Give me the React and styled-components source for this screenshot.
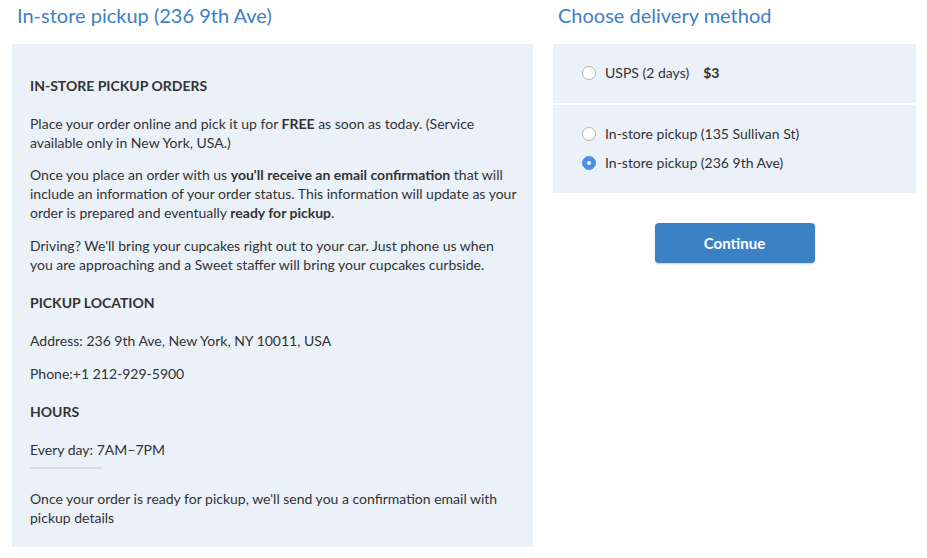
import React from "react";
import styled, { createGlobalStyle } from "styled-components";

const Global = createGlobalStyle`
    body {
        margin: 0;
        background: #ffffff;
        font-family: "Lato", "Open Sans", sans-serif;
        color: #333333;
    }
`;

const Page = styled.div`
    display: grid;
    grid-template-columns: 521px 363px;
    column-gap: 20px;
    padding: 3px 11px 12px 12px;
`;

const Column = styled.div`
    display: flex;
    flex-direction: column;
`;

const Title = styled.h2`
    margin: 0 0 17px 5px;
    font-size: 20px;
    line-height: 24px;
    font-weight: 400;
    color: #3d7fc4;
`;

const InfoPanel = styled.div`
    background: #eaf1f9;
    padding: 32px 14px 20px 18px;
    font-size: 14px;
    line-height: 19px;
`;

const Heading = styled.h4`
    margin: 19px 0;
    font-size: 14px;
    line-height: 19px;
    font-weight: 700;
    text-transform: uppercase;
    &:first-child {
        margin-top: 0;
    }
`;

const Para = styled.p`
    margin: 0 0 ${(p) => p.$gap ?? 14}px;
    b {
        font-weight: 700;
    }
`;

const Rule = styled.div`
    width: 72px;
    height: 2px;
    background: #d8dde5;
    margin-bottom: 20px;
`;

const Options = styled.div`
    display: flex;
    flex-direction: column;
    gap: 2px;
`;

const Group = styled.div`
    background: #eaf1f9;
    padding: 19px 30px 21px;
    display: flex;
    flex-direction: column;
    gap: 10px;
`;

const Option = styled.label`
    display: flex;
    align-items: center;
    gap: 9px;
    font-size: 14px;
    line-height: 19px;
    cursor: pointer;
`;

const Radio = styled.span`
    width: 14px;
    height: 14px;
    margin-left: -1px;
    box-sizing: border-box;
    border-radius: 50%;
    flex-shrink: 0;
    border: 1px solid ${(p) => (p.$checked ? "#4a90e2" : "#b5b5b5")};
    background: ${(p) => (p.$checked ? "#4a90e2" : "#ffffff")};
    display: flex;
    align-items: center;
    justify-content: center;
    &::after {
        content: "";
        width: 4px;
        height: 4px;
        border-radius: 50%;
        background: #ffffff;
        display: ${(p) => (p.$checked ? "block" : "none")};
    }
`;

const Price = styled.span`
    font-weight: 700;
    margin-left: 5px;
`;

const Actions = styled.div`
    display: flex;
    justify-content: center;
    padding-top: 30px;
`;

const Button = styled.button`
    width: 160px;
    height: 40px;
    border: none;
    border-radius: 4px;
    background: #3b82c4;
    color: #ffffff;
    font-family: inherit;
    font-size: 15px;
    font-weight: 700;
    box-shadow: 0 1px 2px rgba(0, 0, 0, 0.2);
    cursor: pointer;
`;

const App = () => (
    <>
        <Global />
        <Page>
            <Column>
                <Title>In-store pickup (236 9th Ave)</Title>
                <InfoPanel>
                    <Heading>In-store pickup orders</Heading>
                    <Para $gap={13}>
                        Place your order online and pick it up for <b>FREE</b> as soon as today. (Service
                        available only in New York, USA.)
                    </Para>
                    <Para>
                        Once you place an order with us <b>you'll receive an email confirmation</b> that will
                        include an information of your order status. This information will update as your
                        order is prepared and eventually <b>ready for pickup</b>.
                    </Para>
                    <Para>
                        Driving? We'll bring your cupcakes right out to your car. Just phone us when
                        you are approaching and a Sweet staffer will bring your cupcakes curbside.
                    </Para>
                    <Heading>Pickup location</Heading>
                    <Para>Address: 236 9th Ave, New York, NY 10011, USA</Para>
                    <Para>Phone:+1 212-929-5900</Para>
                    <Heading>Hours</Heading>
                    <Para $gap={8}>Every day: 7AM–7PM</Para>
                    <Rule />
                    <Para $gap={0}>
                        Once your order is ready for pickup, we'll send you a confirmation email with
                        pickup details
                    </Para>
                </InfoPanel>
            </Column>
            <Column>
                <Title>Choose delivery method</Title>
                <Options>
                    <Group>
                        <Option>
                            <Radio />
                            <span>USPS (2 days)</span>
                            <Price>$3</Price>
                        </Option>
                    </Group>
                    <Group>
                        <Option>
                            <Radio />
                            <span>In-store pickup (135 Sullivan St)</span>
                        </Option>
                        <Option>
                            <Radio $checked />
                            <span>In-store pickup (236 9th Ave)</span>
                        </Option>
                    </Group>
                </Options>
                <Actions>
                    <Button>Continue</Button>
                </Actions>
            </Column>
        </Page>
    </>
);

export default App;
